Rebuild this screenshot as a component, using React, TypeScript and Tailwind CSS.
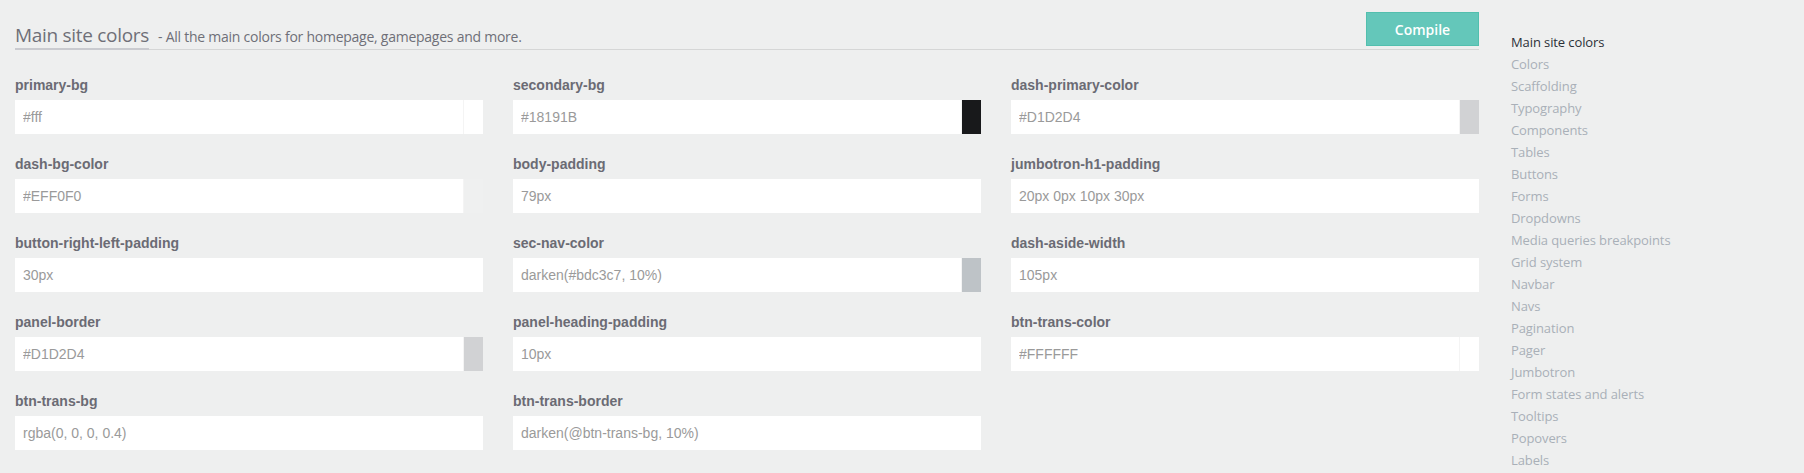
import React from 'react';

type Field = {
  name: string;
  value: string;
  swatch?: string;
};

const fields: Field[] = [
  { name: 'primary-bg', value: '#fff', swatch: '#ffffff' },
  { name: 'secondary-bg', value: '#18191B', swatch: '#18191b' },
  { name: 'dash-primary-color', value: '#D1D2D4', swatch: '#d1d2d4' },
  { name: 'dash-bg-color', value: '#EFF0F0', swatch: '#eff0f0' },
  { name: 'body-padding', value: '79px' },
  { name: 'jumbotron-h1-padding', value: '20px 0px 10px 30px' },
  { name: 'button-right-left-padding', value: '30px' },
  { name: 'sec-nav-color', value: 'darken(#bdc3c7, 10%)', swatch: '#bec3c7' },
  { name: 'dash-aside-width', value: '105px' },
  { name: 'panel-border', value: '#D1D2D4', swatch: '#d1d2d4' },
  { name: 'panel-heading-padding', value: '10px' },
  { name: 'btn-trans-color', value: '#FFFFFF', swatch: '#ffffff' },
  { name: 'btn-trans-bg', value: 'rgba(0, 0, 0, 0.4)' },
  { name: 'btn-trans-border', value: 'darken(@btn-trans-bg, 10%)' },
];

const sections = [
  'Main site colors',
  'Colors',
  'Scaffolding',
  'Typography',
  'Components',
  'Tables',
  'Buttons',
  'Forms',
  'Dropdowns',
  'Media queries breakpoints',
  'Grid system',
  'Navbar',
  'Navs',
  'Pagination',
  'Pager',
  'Jumbotron',
  'Form states and alerts',
  'Tooltips',
  'Popovers',
  'Labels',
];

const ubuntuish = { fontFamily: '"Open Sans", "Noto Sans", sans-serif' };

function VariableField({ field }: { field: Field }) {
  return (
    <div className="flex flex-col">
      <label
        className="text-[14px] leading-[20px] font-bold text-[#6b6b74] mb-[5px]"
        style={{ fontFamily: '"Liberation Sans", Arial, sans-serif' }}
      >
        {field.name}
      </label>
      <div className="flex h-[34px]">
        <input
          readOnly
          value={field.value}
          className="flex-1 min-w-0 h-full bg-white px-[8px] text-[14px] text-[#9a9a9a] outline-none"
          style={{ fontFamily: '"Liberation Sans", Arial, sans-serif' }}
        />
        {field.swatch && (
          <span
            className="w-[20px] h-full border-l border-[#f4f4f4]"
            style={{ backgroundColor: field.swatch }}
          />
        )}
      </div>
    </div>
  );
}

export default function App() {
  return (
    <div className="min-h-screen w-full bg-[#eeefef] flex">
      <div className="w-[1494px] px-[15px]">
        {/* Header with compile button */}
        <div className="flex items-end justify-between pt-[12px] border-b border-[#d5d6d6]">
          <div className="flex items-end" style={ubuntuish}>
            <span className="text-[19px] leading-[24px] text-[#6f6f78] border-b-2 border-[#c9cacf] mb-[-1px] pb-[1px] tracking-[-0.3px]">
              Main site colors
            </span>
            <span className="text-[14px] leading-[20px] text-[#6f6f78] ml-[9px] pb-[2px] tracking-[-0.25px]">
              - All the main colors for homepage, gamepages and more.
            </span>
          </div>
          <button
            className="w-[113px] h-[34px] mb-[3px] bg-[#64c7ba] border border-[#52bfae] text-white text-[14px] font-semibold"
            style={ubuntuish}
          >
            Compile
          </button>
        </div>

        {/* Variables grid */}
        <div className="grid grid-cols-3 gap-x-[30px] gap-y-[20px] mt-[25px]">
          {fields.map((f) => (
            <VariableField key={f.name} field={f} />
          ))}
        </div>
      </div>

      {/* Section navigation */}
      <nav className="flex-1 pl-[17px] pt-[31px]" style={ubuntuish}>
        <ul>
          {sections.map((s, i) => (
            <li
              key={s}
              className={
                'text-[13px] leading-[22px] tracking-[-0.1px] ' +
                (i === 0 ? 'text-[#2c3038]' : 'text-[#a9b0b8]')
              }
            >
              {s}
            </li>
          ))}
        </ul>
      </nav>
    </div>
  );
}
